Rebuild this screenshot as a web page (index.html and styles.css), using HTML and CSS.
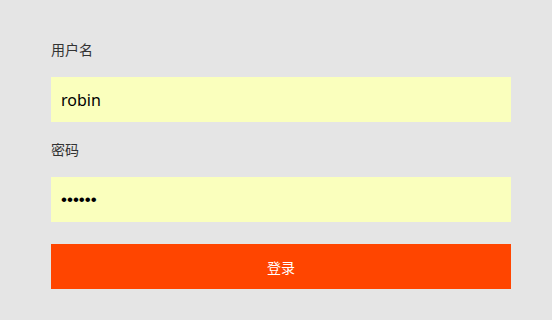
FILE: index.html
```html
<!DOCTYPE html>
<html lang="zh-CN">

<head>
    <meta charset="UTF-8">
    <meta name="viewport" content="width=device-width, initial-scale=1.0">
    <title>登录</title>
    <link rel="stylesheet" href="styles.css">
</head>

<body>
    <form class="login-form">
        <label class="field-label" for="username">用户名</label>
        <input class="field-input" id="username" type="text" value="robin">
        <label class="field-label" for="password">密码</label>
        <input class="field-input field-password" id="password" type="password" value="robin1">
        <button class="login-btn" type="button">登录</button>
    </form>
</body>

</html>
```

FILE: styles.css
```css
* {
    margin: 0;
    padding: 0;
    box-sizing: border-box;
}

body {
    background-color: #e5e5e5;
    font-family: "Noto Sans", "Noto Sans CJK SC", sans-serif;
    color: #333;
}

.login-form {
    display: flex;
    flex-direction: column;
    width: 460px;
    margin-left: 51px;
    padding-top: 40px;
}

.field-label {
    font-size: 14px;
    line-height: 20px;
    margin-bottom: 17px;
}

.field-input {
    height: 45px;
    border: none;
    outline: none;
    background-color: #faffbd;
    padding: 0 10px;
    font-family: "Noto Sans", sans-serif;
    font-size: 16px;
    color: #000;
    margin-bottom: 18px;
}

.field-password {
    font-family: "Liberation Sans", sans-serif;
    font-size: 17px;
}

.login-btn {
    height: 45px;
    border: none;
    margin-top: 4px;
    background-color: #ff4500;
    color: #fff;
    font-family: "Noto Sans CJK SC", sans-serif;
    font-size: 14px;
    cursor: pointer;
}
```
